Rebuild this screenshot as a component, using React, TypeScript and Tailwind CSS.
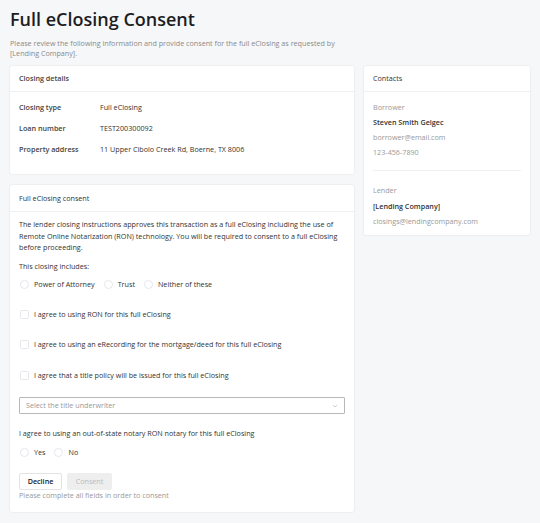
import React from 'react'

const font = { fontFamily: '"Open Sans", "Noto Sans", sans-serif' }

const Radio = ({ label }: { label: string }) => (
    <label className="flex items-center gap-[5px]">
        <span className="size-[9px] rounded-full border border-gray-200 bg-white"></span>
        <span>{label}</span>
    </label>
)

const Check = ({ label }: { label: string }) => (
    <label className="flex items-center gap-[5px]">
        <span className="size-[9px] rounded-[1.5px] border border-gray-200 bg-white"></span>
        <span>{label}</span>
    </label>
)

const App = () => {
    return (
        <div style={font} className="min-h-[523px] w-[540px] bg-[#f6f7f9] px-[10px] pt-[8px] text-[7.2px] leading-[11px] text-[#333]">
            <h1 className="text-[18px] font-semibold leading-[22px] text-[#1d1d1f]">Full eClosing Consent</h1>
            <p className="mt-[8px] w-[335px] leading-[10px] text-[#8a8a8a]">
                Please review the following information and provide consent for the full eClosing as requested by [Lending Company].
            </p>
            <div className="mt-[8px] flex items-start gap-[10px]">
                <div className="flex w-[344px] flex-col gap-[11px]">
                    <div className="rounded-[2px] bg-white shadow-[0_0_2px_rgba(0,0,0,0.12)]">
                        <div className="flex h-[26px] items-center border-b border-[#eef0f2] px-[9px] font-semibold text-[#444]">Closing details</div>
                        <div className="flex flex-col gap-[10px] px-[9px] pb-[19.5px] pt-[9.5px]">
                            {[
                                ['Closing type', 'Full eClosing'],
                                ['Loan number', 'TEST200300092'],
                                ['Property address', '11 Upper Cibolo Creek Rd, Boerne, TX 8006'],
                            ].map(([k, v]) => (
                                <div key={k} className="flex">
                                    <span className="w-[81px] font-semibold text-[#444]">{k}</span>
                                    <span>{v}</span>
                                </div>
                            ))}
                        </div>
                    </div>
                    <div className="rounded-[2px] bg-white shadow-[0_0_2px_rgba(0,0,0,0.12)]">
                        <div className="flex h-[27px] items-center border-b border-[#eef0f2] px-[9px] text-[#333]">Full eClosing consent</div>
                        <div className="px-[9px] pb-[10.5px] pt-[7px]">
                            <p className="leading-[11.5px]">
                                The lender closing instructions approves this transaction as a full eClosing including the use of Remote Online Notarization (RON) technology. You will be required to consent to a full eClosing before proceeding.
                            </p>
                            <p className="mt-[7px]">This closing includes:</p>
                            <div className="mt-[7px] flex gap-[9px] pl-[1px]">
                                <Radio label="Power of Attorney" />
                                <Radio label="Trust" />
                                <Radio label="Neither of these" />
                            </div>
                            <div className="mt-[19px] flex flex-col gap-[19.5px] pl-[1px]">
                                <Check label="I agree to using RON for this full eClosing" />
                                <Check label="I agree to using an eRecording for the mortgage/deed for this full eClosing" />
                                <Check label="I agree that a title policy will be issued for this full eClosing" />
                            </div>
                            <div className="mt-[16.5px] flex h-[17px] items-center justify-between rounded-[1px] border border-[#b8b8b8] px-[6px] text-[#999]">
                                <span>Select the title underwriter</span>
                                <svg width="6" height="4" viewBox="0 0 6 4" fill="none">
                                    <path d="M1 1l2 2 2-2" stroke="#bbb" strokeWidth="0.7" />
                                </svg>
                            </div>
                            <p className="mt-[13.5px]">I agree to using an out-of-state notary RON notary for this full eClosing</p>
                            <div className="mt-[8px] flex gap-[9px] pl-[1px]">
                                <Radio label="Yes" />
                                <Radio label="No" />
                            </div>
                            <div className="mt-[15.5px] flex gap-[5px]">
                                <button className="h-[17px] w-[43px] rounded-[2px] border border-[#e3e3e3] bg-white font-semibold text-[#222]">Decline</button>
                                <button className="h-[17px] w-[45px] rounded-[2px] bg-[#eeeeee] text-[#bbb]">Consent</button>
                            </div>
                            <p className="text-[#999]">Please complete all fields in order to consent</p>
                        </div>
                    </div>
                </div>
                <div className="w-[166px] rounded-[2px] bg-white shadow-[0_0_2px_rgba(0,0,0,0.12)]">
                    <div className="flex h-[26px] items-center border-b border-[#eef0f2] px-[9px] text-[#333]">Contacts</div>
                    <div className="px-[9px] pb-[8.5px] pt-[9.5px]">
                        <p className="text-[#999]">Borrower</p>
                        <p className="mt-[4px] font-semibold text-[#333]">Steven Smith Gelgec</p>
                        <p className="mt-[4px] text-[#999]">borrower@email.com</p>
                        <p className="mt-[4px] text-[#999]">123-456-7890</p>
                        <div className="mb-[13.5px] mt-[12.5px] border-t border-[#eef0f2]"></div>
                        <p className="text-[#999]">Lender</p>
                        <p className="mt-[5px] font-semibold text-[#333]">[Lending Company]</p>
                        <p className="mt-[4px] text-[#999]">closings@lendingcompany.com</p>
                    </div>
                </div>
            </div>
        </div>
    )
}

export default App
